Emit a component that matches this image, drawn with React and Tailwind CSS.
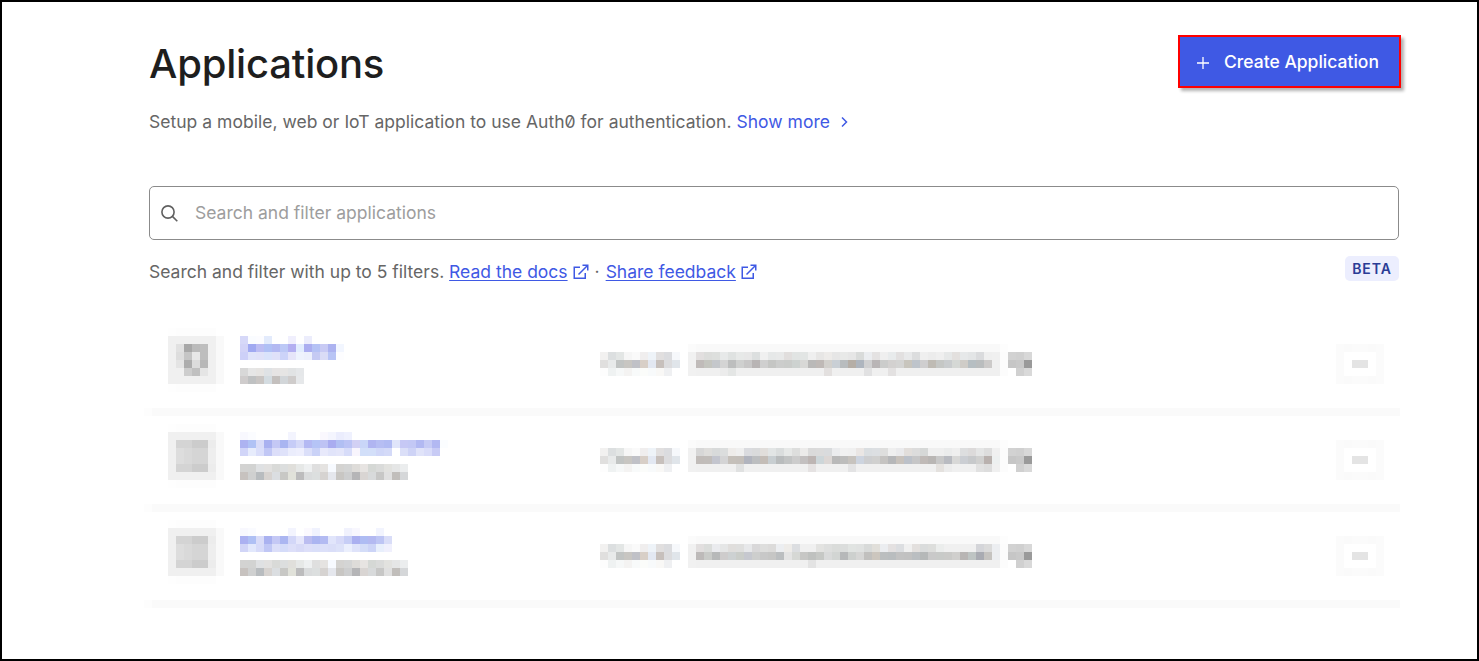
import React from "react";

// Each token is one 8px block: two digits are a grey level, six are a full hex colour.
const toColor = (token) =>
  token.length === 2 ? `#${token}${token}${token}` : `#${token}`;

const FILL = "f0";

// Code field line: 37 blocks of text padded by the field background.
const codeLine = (cells, end = FILL) => `f1 ${cells} ${end} fc`;

const sparseLine = (marks) => {
  const cells = Array(37).fill(FILL);
  Object.entries(marks).forEach(([i, color]) => {
    cells[i] = color;
  });
  return codeLine(cells.join(" "));
};

const CODE_TOP = `fb ${Array(38).fill("f9").join(" ")} fd`;

const CLIENT_LABEL = [
  "f2f1f0 dcdfe0 e3e6e5 f6 fa f0eeee eef3f8 e1dfdf dbdcdf f6f8fb",
  "e0dfde e8eaea c1c4c3 c8c6c2 c0c1c7 d8cfc7 e3e8f2 c7c0bc dcdcde e0e5ea",
  "fd eff2f2 f6f8f8 f4f3f2 f8fafa fbfcfa f8fafb f9f8f6 eff0f2 ff",
];

const COPY_ICON = ["d2 d0 d8", "c6 c9 9a", "ff d0 d9"];

const MORE_BUTTON = [
  "fb fa fb fb fa fb",
  "fb ff ff ff ff fb",
  "fb ff e4 e4 ff fb",
  "fb ff ff ff ff fb",
  "fb fa fb fb fa fb",
];

const GENERIC_AVATAR = [
  "fe fd fd fd fd fd ff",
  "f0 f0 f0 f0 f0 f0 f9",
  "f0 e1 a8 bb be f0 f9",
  "f0 dd c5 e8 be f0 f9",
  "f0 e4 ad dc b8 f0 f9",
  "f0 f0 cd c0 e5 f0 f9",
  "f0 f0 f0 f0 f0 f0 f9",
  "fe fd fd fd fd fd ff",
];

const MACHINE_AVATAR = [
  "fe fd fd fd fd fd ff",
  "f0 f0 f0 f0 f0 f0 f9",
  "f0 d4 d4 cc cc ec f9",
  "f0 dd d9 d5 d5 ee f9",
  "f0 dd d9 d5 d5 ee f9",
  "f0 d4 d4 cc cc ec f9",
  "f0 f0 f0 f0 f0 f0 f9",
  "fe fd fd fd fd fd ff",
];

const MACHINE_TYPE = [
  "d3d3d2 d2d3d2 dfe1e3 e2e1e0 d9dad8 dcdede e0dfdb e6e8e7 eef0f1 df e5e3e1 f7faff d4d3d1 d4d5d5 dedcd9 e7e4e2 d5d8d5 dadbda e2e2df e5e6e6 ebedee",
  "c7c2bf cfd0d0 b8bcbf d7d3d0 dbdee1 c8c8c5 e1e2da bcbcbd dadcdd dcdfdf d6d3d1 e5e7ed c8c6c3 cdcecf b5b5b7 d9d5d3 d8dadb c7c7c6 e0 c1bebb d5d7d9",
];

const applications = [
  {
    id: 1,
    avatar: GENERIC_AVATAR,
    name: [
      "d6d8f8 fafcff fcfcff e3ebfc ff ff f0effd ff ecedfc",
      "d2d3f7 a0a9f1 bcbdf3 b0c0f5 b3b9f2 bcc8f6 b3aff1 e2edfe abaef0 b5c2f5 c8caf4 acb2f0 f2f6ff",
      "cdd0f8 e0e4fa e0e2f9 dae3fb dfe1f9 ccd3f9 e6e5f9 eef3fd ecf0fc c5caf3 dadcf6 b8c4f5 fdfdff",
    ],
    type: [
      "d8 e6 e6e4e2 dfe2e5 e6e4e4 e6e5e4 e1e3e4 e5e7e9",
      "cfcccc bfc1c2 c9c5c3 d4dce1 c4c0be d2d6d9 cfcccb e6e8ea",
    ],
    code: [
      CODE_TOP,
      codeLine(
        "e2dfdf dcdddb dddfdd e7e9e9 dfe2e1 e7e9e8 e7 dcdfdf f0 e6e8e8 e8e9e9 e1dedd e1e4e3 e2e5e4 ef e7e6e5 edebe9 e6 e8e9e8 e6 d9dbda ebedf0 e4e2e2 ef e8ebec e2e0e0 e8e9ea dcddde ef ec ef e6e8e8 e3e0de e6e8e9 e3e5e6 dadbdd ef"
      ),
      codeLine(
        "c0bbb9 c4c5bf c4c7cb d4 bdbebe cfd0cf c8c7c7 b8b4b4 cf c5c6c4 cccdcc caccca cdd2d0 d8d8d6 bab9b8 bfb9b6 d2d0cc c9cfd5 b8bcbe b5aea6 aeb5be d0d0d1 b9b5b6 cbcccb d3d1d0 d4d4d3 c8c5bd bec4cb cfcecf bfbbb4 c5c7c5 c9ccce d5d8d5 cfccc7 b6bec2 babdbe cccac9"
      ),
      sparseLine({ 3: "ec", 4: "e4e6e5", 16: "e3e0df", 21: "e1e1e2", 24: "e3e1e1" }),
    ],
  },
  {
    id: 2,
    avatar: MACHINE_AVATAR,
    name: [
      "f8f8fe fbfcff ff ff ff ff f3f4fe ff ff ff faf8fe f4f5fe ebedfd eff1fe",
      "adb3f1 b0c2f5 d9dcf8 a9b1f0 c4c8f5 a9b5f1 c6ccf7 d5d9f8 b4b9f3 b5c4f6 bec3f4 a9acf0 b1bff3 bbc3f5 d2d0f4 c9d6f8 b0b5f1 b6bef3 b1bbf3 e0e5fa c6c8f5 c3c8f5 b2b9f2 c6cbf5 b2b8f2 fbfdff",
      "d1d5f8 e7ecfc dadefa c1c7f5 dcdef9 dfe2fa ebedfc eeeffd dbdff9 cad2f7 e8e9fb e1e4fa e4e6fa d7dcf9 f8f5fd d2dff9 d3dff9 d0d7f8 d4daf8 ff dbdff8 ced3f6 e0e3f9 d9dcf9 c8cbf5",
    ],
    type: MACHINE_TYPE,
    code: [
      CODE_TOP,
      codeLine(
        "d7 dedddb d8dada dbdddd eeecea ef dadbdf d9dadb e1dedb e2e5e5 dadddd e6e8e7 dddedd ecebea da db d9dbdd ebecee f1 f0 eae6e4 dadee1 dcdfe2 dededd ef eaeaec e2dedb dc d6d8d7 ef ef ebecec ef dddedf dcdada e4e5e5 dd"
      ),
      codeLine(
        "c1bcb9 c1bdba c3c5ce d4d4d5 c5c0ba c4bfba b1b4be bcbec0 c4bdb7 c8ced1 b9bcbd c2c4c4 cc c3c0c0 bdb5b3 cdd6d9 dcd7d5 b9 bdbdbc c7c3be cdd4df cdced0 d0d0cf c5c3c1 b6b7b9 c8c2bc bcc1c9 c6c6c7 c0bab7 b9b6b4 c8 b9bbc1 d8d8d7 cbced3 c7c9cb d0d0cf b9b1ae",
        "edf0f0"
      ),
      sparseLine({ 5: "e0e1e1", 14: "e5e2e2", 19: "e3e3e4", 30: "e4e1de", 31: "ec", 35: "e1", 36: "dd" }),
    ],
  },
  {
    id: 3,
    avatar: MACHINE_AVATAR,
    name: [
      "f8f8fe fafbff ff ff ff ff f3f4fe ff fbf9fe f0f2fe ff ff ff f1f2fd f8f7fe ff ff f2f4fe",
      "abb1f1 afc0f4 d9dcf8 aab2f0 c4c8f5 abb6f1 d3d7f8 e6e7fb bbbdf0 abb5f1 b3bbf2 e1e5fb d7daf8 c7cef6 abb0f0 aebcf3 b3b9f1 bdc5f4 d9ddf8",
      "d1d5f7 e2e8fc d7dbf9 c0c7f5 dbdef9 d5dcf9 dddff9 d8daf7 dddff9 dadff9 dce0f9 dadef8 dde2f9 ebeffd dfe3fa d4ddf8 ccd4f7 e8effc f0f0fd",
    ],
    type: MACHINE_TYPE,
    code: [
      CODE_TOP,
      codeLine(
        "e2dfdf dbdddb eaebee e5e6e6 e0dedc dfdfde e7e8ea d9d8d9 dededd dcdbda eceef1 eeece9 dcdee1 f0 f0 e3e3e1 dedfde dadcda dbdddc e1e4e2 e0e2e1 d8dad9 e1dfda ebedf0 e4e1e1 dcdee1 f0 e3e0de dadcdc dddedc ebedec f0 f0 f0 f0 d4d5d9 db",
        "eceef1"
      ),
      codeLine(
        "bdbab9 c9cbc8 b7b9b9 cecccc cdd1d2 cacdc9 c6c8cf cdcecd c8 c6c6c5 bbbec0 e4 d6d8d5 c7c7c5 bfc1bf c6c8c5 d9dada d2d5d3 b6b8b9 cdd0ce d6d6d5 c1c0be ccc6be bbbebf b9bdbf c2 c1 babec1 b5b8b8 c9 c8cac8 cacac8 d0cfcd b8b5b4 bec4c3 a9abb2 c5c3c0",
        "eceef1"
      ),
      sparseLine({ 14: "e3" }),
    ],
  },
];

function Mosaic({ rows, className = "" }) {
  const grid = rows.map((row) => row.split(" "));
  const columns = Math.max(...grid.map((cells) => cells.length));

  return (
    <svg
      width={columns * 8}
      height={grid.length * 8}
      shapeRendering="crispEdges"
      className={`block shrink-0 ${className}`}
    >
      {grid.map((cells, y) =>
        cells.map((token, x) => (
          <rect
            key={`${x}-${y}`}
            x={x * 8}
            y={y * 8}
            width="8"
            height="8"
            fill={toColor(token)}
          />
        ))
      )}
    </svg>
  );
}

function ExternalIcon() {
  return (
    <svg
      width="16"
      height="16"
      viewBox="0 0 16 16"
      fill="none"
      stroke="currentColor"
      strokeWidth="1.5"
      className="block shrink-0"
    >
      <path d="M7 3.25H1.25V14.25H12.25V9M9.5 1.25H14.75V6.5M14.5 1.5L5.5 10.5" />
    </svg>
  );
}

function DocLink({ children }) {
  return (
    <a href="#" className="flex items-center gap-[5px] text-[#3f59e4]">
      <span className="underline decoration-1 underline-offset-2">
        {children}
      </span>
      <ExternalIcon />
    </a>
  );
}

function ApplicationRow({ app }) {
  return (
    <li>
      <div className="flex h-[88px] items-start pt-6 pr-4 pl-6">
        <Mosaic rows={app.avatar} className="-mt-4" />
        <div className="-mt-2 ml-4 flex w-[360px] flex-col gap-2">
          <Mosaic rows={app.name} />
          <Mosaic rows={app.type} />
        </div>
        <Mosaic rows={CLIENT_LABEL} className="mt-2 mr-2" />
        <Mosaic rows={app.code} />
        <Mosaic rows={COPY_ICON} className="mt-2" />
        <Mosaic rows={MORE_BUTTON} className="ml-auto" />
      </div>
      <div className="h-2 border-l-8 border-[#fdfdfd] bg-[#fafafa]" />
    </li>
  );
}

function App() {
  return (
    <main className="h-[661px] w-[1479px] overflow-hidden border-2 border-black bg-white pr-[78px] pl-[147px] font-['Inter',sans-serif] text-[17.5px] text-[#666666]">
      <header className="flex items-start justify-between pt-[33px]">
        <div>
          <h1 className="pt-1 text-[40px] leading-[50px] font-medium tracking-[-0.2px] text-[#1e1e1e]">
            Applications
          </h1>
          <p className="mt-[19px] flex items-center leading-7 tracking-[0.02px] whitespace-pre">
            <span className="slashed-zero">
              Setup a mobile, web or IoT application to use Auth0 for
              authentication.{" "}
            </span>
            <a href="#" className="flex items-center gap-[10px] text-[#3f59e4]">
              Show more
              <svg
                width="8"
                height="12"
                viewBox="0 0 8 12"
                fill="none"
                stroke="currentColor"
                strokeWidth="1.5"
              >
                <path d="M2 1.5L6.5 6L2 10.5" />
              </svg>
            </a>
          </p>
        </div>
        <button className="-mr-[2px] flex h-[53px] w-[223px] items-center border-2 border-[#ff0000] bg-[#3f59e4] pt-0.5 pl-[17px] font-medium text-white shadow-[3px_3px_3px_rgba(0,0,0,0.3)]">
          <svg
            width="12"
            height="12"
            viewBox="0 0 12 12"
            stroke="currentColor"
            strokeWidth="1.3"
            className="mr-[15px]"
          >
            <path d="M6 0V12M0 6H12" />
          </svg>
          Create Application
        </button>
      </header>

      <div className="mt-[50px] flex h-[54px] items-center rounded-[5px] border border-[#8b8b8b] bg-white pl-[11px]">
        <svg
          width="17"
          height="17"
          viewBox="0 0 17 17"
          fill="none"
          stroke="#606060"
          strokeWidth="1.6"
        >
          <circle cx="7" cy="7" r="6.1" />
          <path d="M11.4 11.4L16.3 16.3" />
        </svg>
        <input
          type="text"
          placeholder="Search and filter applications"
          className="ml-[17px] flex-1 outline-none placeholder:text-[#9d9d9d]"
        />
      </div>

      <div className="mt-4 flex h-8 items-start justify-between">
        <p className="flex items-center leading-8 whitespace-pre">
          <span>Search and filter with up to 5 filters. </span>
          <DocLink>Read the docs</DocLink>
          <span className="px-1.5">·</span>
          <DocLink>Share feedback</DocLink>
        </p>
        <span className="flex h-[25px] w-[54px] items-center justify-center rounded-[5px] bg-[#eceefe] text-sm font-semibold tracking-[0.9px] text-[#2a3c96]">
          BETA
        </span>
      </div>

      <ul className="mt-8 -mr-px -ml-[5px]">
        {applications.map((app) => (
          <ApplicationRow key={app.id} app={app} />
        ))}
      </ul>
    </main>
  );
}

export default App;
